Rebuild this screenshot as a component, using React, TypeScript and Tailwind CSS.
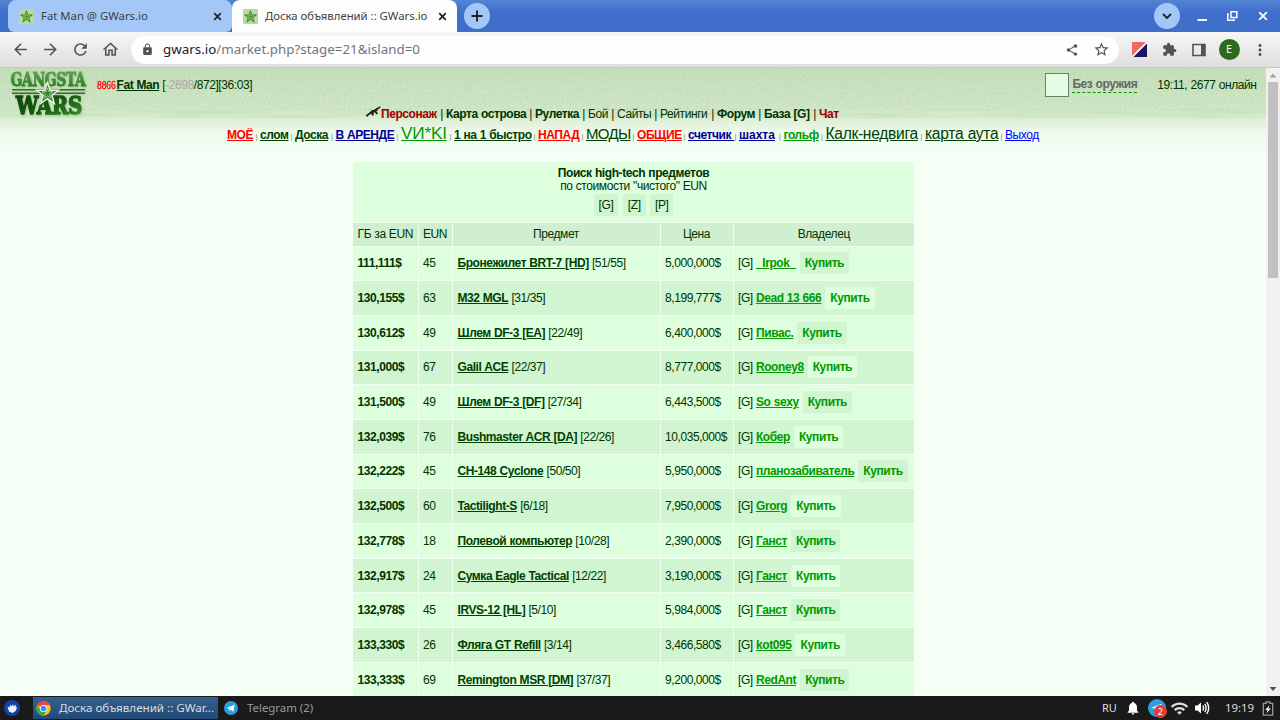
import React from 'react';
import {
  MdArrowBack, MdArrowForward, MdRefresh, MdOutlineHome, MdLock, MdShare, MdStarBorder,
  MdExtension, MdMoreVert, MdNotifications, MdWifi,
} from 'react-icons/md';

function Favicon() {
  return (
    <svg viewBox="0 0 16 16" className="h-[15px] w-[15px] shrink-0">
      <rect width="16" height="16" fill="#b5dc9b" />
      <path d="M8 .8l1.8 5.1h5.3l-4.2 3.3 1.6 5.4L8 11.5l-4.500 3.100 1.600-5.400L.9 5.900h5.300z" fill="#3b7d28" />
      <path d="M8 4.600l.9 2.600h2.600l-2.100 1.600.8 2.600L8 9.900l-2.200 1.500.8-2.600-2.100-1.600h2.600z" fill="#4f9038" stroke="#a5d48a" strokeWidth=".7" />
    </svg>
  );
}

function Logo() {
  return (
    <svg viewBox="0 0 90 50" className="h-[50px] w-[90px] drop-shadow-[1px_1px_1px_#a9c79c]">
      <defs>
        <linearGradient id="top" x1="0" y1="0" x2="0" y2="1">
          <stop offset="0" stopColor="#6aa35c" />
          <stop offset="1" stopColor="#1f7a14" />
        </linearGradient>
        <linearGradient id="bot" x1="0" y1="0" x2="1" y2="1">
          <stop offset="0" stopColor="#0b4208" />
          <stop offset=".5" stopColor="#145a0e" />
          <stop offset="1" stopColor="#3d9431" />
        </linearGradient>
      </defs>
      <g fontFamily="DejaVu Serif, serif" fontWeight="700">
        <text x="6.500" y="18" fontSize="18" textLength="75" lengthAdjust="spacingAndGlyphs" fill="url(#top)" stroke="url(#top)" strokeWidth=".9">GANGSTA</text>
        <text x="12" y="45.500" fontSize="24.500" textLength="66" lengthAdjust="spacingAndGlyphs" fill="url(#bot)" stroke="url(#bot)" strokeWidth="1.500">WARS</text>
      </g>
      <path d="M8 21.700h73M8 25.200h73" stroke="#2b7522" strokeWidth="1.400" />
      <path d="M43.500 14.500l2.700 7.700h8.200l-6.500 5 2.400 8.300-6.800-4.900-6.800 4.900 2.400-8.300-6.500-5h8.200z" fill="#2f7a25" stroke="#eef8e8" strokeWidth="1.400" />
      <path d="M43.500 19.800l1.400 3.900h4.100l-3.300 2.500 1.200 4.100-3.400-2.400-3.400 2.400 1.200-4.100-3.300-2.500h4.100z" fill="#37832b" stroke="#b9dcab" strokeWidth=".8" />
    </svg>
  );
}

function HeaderTexture() {
  return (
    <svg className="pointer-events-none absolute left-0 top-0 h-[50px] w-[1266px]">
      <defs>
        <filter id="grain" x="0" y="0" width="100%" height="100%">
          <feTurbulence type="fractalNoise" baseFrequency="0.45" numOctaves="2" seed="3" />
          <feColorMatrix values="0 0 0 0 .42  0 0 0 0 .62  0 0 0 0 .36  .9 0 0 0 -.36" />
        </filter>
        <filter id="streak" x="0" y="0" width="100%" height="100%">
          <feTurbulence type="fractalNoise" baseFrequency="0.012 0.350" numOctaves="2" seed="8" />
          <feColorMatrix values="0 0 0 0 .5  0 0 0 0 .7  0 0 0 0 .44  1.200 0 0 0 -.45" />
        </filter>
      </defs>
      <rect width="1266" height="42" filter="url(#grain)" />
      <rect y="41" width="1266" height="9" filter="url(#streak)" />
    </svg>
  );
}

function Chrome() {
  return (
    <svg viewBox="0 0 48 48" className="h-[15px] w-[15px] shrink-0">
      <circle cx="24" cy="24" r="23" fill="#fbc116" />
      <path d="M24 24L4.100 12.500A23 23 0 0 1 43.900 12.500L24 13z" fill="#ea4335" />
      <path d="M4.100 12.500A23 23 0 0 0 24 47l10-17L24 24l-10 5z" fill="#34a853" />
      <circle cx="24" cy="24" r="11.500" fill="#fff" />
      <circle cx="24" cy="24" r="8.800" fill="#4285f4" />
    </svg>
  );
}

function Plane({ className }: { className: string }) {
  return (
    <svg viewBox="0 0 24 24" className={className}>
      <circle cx="12" cy="12" r="12" fill="#2a9fda" />
      <path d="M4.500 11.800l13.700-5.500-2.300 12-4.200-3.100-2.200 2-.7-4.100z" fill="#fff" />
      <path d="M8.800 13.100l6.500-4.300-5.200 5.300-.6 3.100z" fill="#b7d9ec" />
    </svg>
  );
}

function Tab({ title, active }: { title: string; active?: boolean }) {
  return (
    <div className={active
      ? 'flex h-8 w-[225px] items-center rounded-t-lg bg-[#fdfdfd] pl-[11px] pr-2'
      : 'flex h-8 w-[224px] items-center rounded-t-lg rounded-b-md bg-[#a3c8f7] pl-[11px] pr-2'}>
      <Favicon />
      <span className="ml-[7.500px] flex-1 whitespace-nowrap font-['Noto_Sans',sans-serif] text-[11.340px] text-[#3c4043]">{title}</span>
      <svg viewBox="0 0 13 13" className="h-[13px] w-[13px]"><path d="M3.200 3.200l6.600 6.600M9.800 3.200L3.200 9.800" stroke="#202124" strokeWidth="1.700" /></svg>
    </div>
  );
}

const links: { t: string; slot: string; cls: string }[] = [
  { t: 'МОЁ', slot: 'w-[33px]', cls: 'font-bold text-[#f00]' },
  { t: 'слом', slot: 'w-[35px]', cls: 'font-bold text-[#004000]' },
  { t: 'Доска', slot: 'w-[40.500px]', cls: 'font-bold text-[#004000]' },
  { t: 'В АРЕНДЕ', slot: 'w-[65.500px]', cls: 'font-bold text-[#000099]' },
  { t: 'VИ*KI', slot: 'w-[53px]', cls: 'text-[17.200px] tracking-[-0.200px] text-[#009900]' },
  { t: '1 на 1 быстро', slot: 'w-[84px]', cls: 'font-bold text-[#004000]' },
  { t: 'НАПАД', slot: 'w-[48px]', cls: 'font-bold text-[#f00]' },
  { t: 'МОДЫ', slot: 'w-[51px]', cls: 'text-[15px] tracking-[-0.700px] text-[#004000]' },
  { t: 'ОБЩИЕ', slot: 'w-[51px]', cls: 'font-bold text-[#f00]' },
  { t: 'счетчик\u00a0', slot: 'w-[51px]', cls: 'font-bold text-[#000099]' },
  { t: 'шахта', slot: 'w-[44.500px]', cls: 'font-bold tracking-[0px] text-[#000099]' },
  { t: 'гольф', slot: 'w-[42px]', cls: 'font-bold text-[#009900]' },
  { t: 'Калк-недвига', slot: 'w-[99.500px]', cls: 'text-[15.600px] tracking-[-0.300px] text-[#004000]' },
  { t: 'карта аута', slot: 'w-[80px]', cls: 'text-[15.600px] tracking-[-0.300px] text-[#004000]' },
  { t: 'Выход', slot: 'w-[34px]', cls: 'text-[#0000ff]' },
];

const menu: { t: string; slot: string; cls: string }[] = [
  { t: 'Персонаж', slot: 'w-[65px]', cls: 'font-bold text-[#990000]' },
  { t: 'Карта острова', slot: 'w-[89px]', cls: 'font-bold' },
  { t: 'Рулетка', slot: 'w-[53px]', cls: 'font-bold' },
  { t: 'Бой', slot: 'w-[29px]', cls: '' },
  { t: 'Сайты', slot: 'w-[43px]', cls: '' },
  { t: 'Рейтинги', slot: 'w-[57px]', cls: '' },
  { t: 'Форум', slot: 'w-[47px]', cls: 'font-bold' },
  { t: 'База [G]', slot: 'w-[55px]', cls: 'font-bold' },
  { t: 'Чат', slot: 'w-[20px]', cls: 'font-bold text-[#990000]' },
];

const rows: [string, string, string, string, string, string][] = [
  ['111,111$', '45', 'Бронежилет BRT-7 [HD]', '[51/55]', '5,000,000$', '_Irpok_'],
  ['130,155$', '63', 'M32 MGL', '[31/35]', '8,199,777$', 'Dead 13 666'],
  ['130,612$', '49', 'Шлем DF-3 [EA]', '[22/49]', '6,400,000$', 'Пивас.'],
  ['131,000$', '67', 'Galil ACE', '[22/37]', '8,777,000$', 'Rooney8'],
  ['131,500$', '49', 'Шлем DF-3 [DF]', '[27/34]', '6,443,500$', 'So sexy'],
  ['132,039$', '76', 'Bushmaster ACR [DA]', '[22/26]', '10,035,000$', 'Кобер'],
  ['132,222$', '45', 'CH-148 Cyclone', '[50/50]', '5,950,000$', 'планозабиватель'],
  ['132,500$', '60', 'Tactilight-S', '[6/18]', '7,950,000$', 'Grorg'],
  ['132,778$', '18', 'Полевой компьютер', '[10/28]', '2,390,000$', 'Ганст'],
  ['132,917$', '24', 'Сумка Eagle Tactical', '[12/22]', '3,190,000$', 'Ганст'],
  ['132,978$', '45', 'IRVS-12 [HL]', '[5/10]', '5,984,000$', 'Ганст'],
  ['133,330$', '26', 'Фляга GT Refill', '[3/14]', '3,466,580$', 'kot095'],
  ['133,333$', '69', 'Remington MSR [DM]', '[37/37]', '9,200,000$', 'RedAnt'],
];

function Browser() {
  return (
    <header className="shrink-0">
      <div className="flex h-8 items-start bg-linear-to-b from-[#5283d5] to-[#3f6fca] to-40% pl-[7.500px]">
        <Tab title="Fat Man @ GWars.io" />
        <Tab title="Доска объявлений :: GWars.io" active />
        <svg viewBox="0 0 26 26" className="ml-[7px] mt-[3px] h-[26px] w-[26px]" fill="none" stroke="#202124" strokeWidth="1.900"><circle cx="13" cy="13" r="13" fill="#a3c8f7" stroke="none" /><path d="M13 7.500v11M7.500 13h11" /></svg>
        <svg viewBox="0 0 26 26" className="ml-auto mt-[3px] h-[26px] w-[26px]" fill="none" stroke="#202124" strokeWidth="1.800"><circle cx="13" cy="13" r="13" fill="#a3c8f7" stroke="none" /><path d="M9 11l4 4 4-4" /></svg>
        <svg viewBox="0 0 100 32" className="h-8 w-[100px]" fill="none" stroke="#f4f7fd">
          <path d="M17.500 20h9.500" strokeWidth="2" />
          <path d="M51 11.800h5.800v5.700H51zM49 14h-1.200v6.300h6.200V19" strokeWidth="1.600" />
          <path d="M79.200 12.200l7.600 7.600M86.800 12.200l-7.600 7.600" strokeWidth="1.900" />
        </svg>
      </div>
      <div className="flex h-9 items-center border-b border-[#c6c6c6] bg-linear-to-b from-[#f7f7f7] to-[#dedede] pl-[11px] text-[#505458]">
        <MdArrowBack className="h-[19px] w-[19px]" />
        <MdArrowForward className="ml-[11px] h-[19px] w-[19px]" />
        <MdRefresh className="ml-[11px] h-[19px] w-[19px]" />
        <MdOutlineHome className="ml-[11px] h-[19px] w-[19px]" />
        <div className="ml-[11px] flex h-7 w-[988px] items-center rounded-full bg-[#fefefe] pl-[10px] pr-[9px]">
          <MdLock className="h-[13px] w-[13px]" />
          <span className="ml-[9px] flex-1 font-['Noto_Sans',sans-serif] text-[13.360px] text-[#72767a]"><span className="text-[#202124]">gwars.io</span>/market.php?stage=21&amp;island=0</span>
          <MdShare className="h-[14px] w-[14px]" />
          <MdStarBorder className="ml-[14px] h-[17px] w-[17px]" />
        </div>
        <svg viewBox="0 0 16 16" className="ml-[12.500px] h-[15px] w-[15px]"><path d="M0 0h15L0 15z" fill="#ee6b60" /><path d="M16 1.500V16H1.500z" fill="#1b1464" /><path d="M16 0L0 16" stroke="#f0f0f0" strokeWidth="1.500" /></svg>
        <MdExtension className="ml-[15px] h-[15px] w-[15px]" />
        <svg viewBox="0 0 14 14" className="ml-[15px] h-[14px] w-[14px]"><path d="M1 1.500h12v11H1z" fill="none" stroke="#505458" strokeWidth="1.600" /><path d="M9 1h4v12H9z" fill="#505458" /></svg>
        <div className="ml-[13px] flex h-[21px] w-[21px] items-center justify-center rounded-full bg-[#2b6b1b] font-['Open_Sans',sans-serif] text-[11px] text-white">E</div>
        <MdMoreVert className="ml-[11px] h-[18px] w-[18px]" />
      </div>
    </header>
  );
}

export default function App() {
  return (
    <div className="flex h-[720px] w-[1280px] flex-col overflow-hidden font-['Liberation_Sans',Arial,sans-serif] text-[#003300]">
      <Browser />
      <main className="flex h-[628px] bg-[#f5fff5] text-[12px] tracking-[-0.420px] [word-spacing:0.300px]">
        <div className="relative flex h-[628px] w-[1266px] flex-col overflow-hidden bg-[linear-gradient(to_bottom,#c6deba_0px,#cde4c3_25px,#d4e9cc_48px,#dcefd5_51px,#eef9ea_64px,#f5fff5_84px)]">
          <HeaderTexture />
          <div className="relative flex h-[38px] shrink-0 items-start">
            <div className="ml-[4px] h-[50px] w-[90px] shrink-0"><Logo /></div>
            <div className="ml-[3px] mt-[9px] flex leading-4">
              <span className="w-[19.500px] whitespace-nowrap"><span className="inline-block origin-left scale-x-[0.78] font-['Liberation_Serif',serif] tracking-[0px] text-[#f00] [-webkit-text-stroke:0.300px_#f00]">8866</span></span>
              <b className="underline">Fat Man</b>
              <span className="ml-[3px]">[<span className="text-[#aaaaaa]">-2698</span>/872][36:03]</span>
            </div>
            <div className="ml-auto mt-[5px] flex items-center pr-[9.500px]">
              <span className="h-[24px] w-[24px] border border-[#6d806d] bg-[#e6fbe4]" />
              <b className="ml-[3px] border-b border-dashed border-[#009900] leading-[15px] text-[#666666]">Без оружия</b>
              <span className="ml-[20px]">19:11, 2677 онлайн</span>
            </div>
          </div>
          <nav className="relative flex h-[16px] shrink-0 items-start pl-[365px] leading-4">
            <svg viewBox="0 0 16 12" className="h-3 w-4"><path d="M.5 9.500L5 6l2-2 1.500 0L13.500 1l1.800-.8v1.600L12.500 3.500l.8.5-2 1.200 1.800 2.400-1.500.8L9.700 6.200l-1 .5 0 2.800H7L6.300 7.800 4 9 2.500 10.800z" fill="#1e241c" /></svg>
            {menu.map((m, i) => (
              <span key={m.t} className={`flex shrink-0 justify-between whitespace-nowrap ${m.slot}`}>
                <span className={m.cls}>{m.t}</span>{i < menu.length - 1 && <span className="pr-[3px]">|</span>}
              </span>
            ))}
          </nav>
          <nav className="relative flex h-[25px] shrink-0 items-baseline pl-[227px] leading-[23px]">
            {links.map((l, i) => (
              <span key={l.t} className={`flex shrink-0 items-baseline justify-between whitespace-nowrap ${l.slot}`}>
                <span className={`underline ${l.cls}`}>{l.t}</span>{i < links.length - 1 && <span className="pr-[3px] text-[7.500px] text-[#669966]">|</span>}
              </span>
            ))}
          </nav>
          <table className="relative ml-[353px] mt-[15px] w-[561px] table-fixed border-collapse">
            <colgroup><col className="w-[65px]" /><col className="w-[34px]" /><col className="w-[208px]" /><col className="w-[73px]" /><col className="w-[181px]" /></colgroup>
            <thead>
              <tr className="h-[60px] bg-[#deffde]">
                <td colSpan={5} className="p-0 pt-[5px] text-center align-top leading-[13px]">
                  <b>Поиск high-tech предметов</b><br />по стоимости "чистого" EUN
                  <div className="mt-[1px] flex justify-center gap-[4.500px]">
                    {['[G]', '[Z]', '[P]'].map((s) => <span key={s} className="bg-[#d0f5d0] px-[5px] leading-[22px]">{s}</span>)}
                  </div>
                </td>
              </tr>
              <tr className="h-[24px] bg-[#d0eed0] text-center">
                {['ГБ за EUN', 'EUN', 'Предмет', 'Цена', 'Владелец'].map((h) => (
                  <td key={h} className="whitespace-nowrap border-y border-l border-[#f0fff0] p-0 first:border-l-0">{h}</td>
                ))}
              </tr>
            </thead>
            <tbody>
              {rows.map((r, i) => (
                <tr key={r[0]} className={i % 2 ? 'h-[34.690px] bg-[#d0f5d0]' : 'h-[34.690px] bg-[#deffde]'}>
                  <td className="border-b border-[#f0fff0] p-0 pl-[4.500px] font-bold">{r[0]}</td>
                  <td className="border-b border-l border-[#f0fff0] p-0 pl-[4.500px]">{r[1]}</td>
                  <td className="whitespace-nowrap border-b border-l border-[#f0fff0] p-0 pl-[5px]"><b className="text-[#004000] underline">{r[2]}</b> {r[3]}</td>
                  <td className="border-b border-l border-[#f0fff0] p-0 pl-[4.500px]">{r[4]}</td>
                  <td className="whitespace-nowrap border-b border-l border-[#f0fff0] p-0 pl-[4.500px]">
                    [G] <b className="text-[#009900] underline">{r[5]}</b>
                    <b className={i % 2 ? 'ml-[4px] inline-block bg-[#deffde] px-[5px] leading-[22px] text-[#009900]' : 'ml-[4px] inline-block bg-[#d0f5d0] px-[5px] leading-[22px] text-[#009900]'}>Купить</b>
                  </td>
                </tr>
              ))}
            </tbody>
          </table>
        </div>
        <div className="flex w-[14px] flex-col items-center bg-[#f1f1f1]">
          <svg viewBox="0 0 14 14" className="h-[14px] w-[14px] shrink-0"><path d="M3.500 9.500L7 5.500l3.500 4z" fill="#a0a0a0" /></svg>
          <div className="h-[196px] w-[10px] bg-[#c1c1c1]" />
          <svg viewBox="0 0 14 14" className="mt-auto h-[14px] w-[14px] shrink-0"><path d="M3.500 5L7 9l3.500-4z" fill="#505050" /></svg>
        </div>
      </main>
      <footer className="flex h-6 shrink-0 items-center bg-[#1a1a1a] font-['Noto_Sans',sans-serif] text-[11.400px] text-[#dddddd]">
        <svg viewBox="0 0 16 16" className="ml-[4px] h-4 w-4"><circle cx="8" cy="8" r="8" fill="#1044a8" /><path d="M3.500 6.500l2 1L6 4.500l1.500 2L9 4l.8 2.500L12 4.500l-.3 2.700 1.500.3-1.700 3.500L8.500 13l-3.500-1.500z" fill="#f2f6ff" /></svg>
        <div className="ml-[13px] flex h-[22px] w-[185px] items-center bg-linear-to-b from-[#33608f] to-[#234a76] pl-[3px]">
          <Chrome /><span className="ml-[8px] whitespace-nowrap text-[11.600px]">Доска объявлений :: GWar...</span>
        </div>
        <Plane className="ml-[6px] h-[14px] w-[14px]" />
        <span className="ml-[9px] text-[#9b9b9b]">Telegram (2)</span>
        <span className="ml-auto text-[11px]">RU</span>
        <MdNotifications className="ml-[8px] h-4 w-4 text-white" />
        <span className="relative ml-[7px] h-[18px] w-[18px]"><Plane className="h-[18px] w-[18px]" /><span className="absolute left-[6px] top-[6px] flex h-[13px] w-[13px] items-center justify-center rounded-full bg-[#e93a3a] text-[9px] text-white">2</span></span>
        <MdWifi className="ml-[4px] h-[19px] w-[19px] text-[#dddddd]" />
        <svg viewBox="0 0 16 16" className="ml-[5px] h-4 w-4" fill="none" stroke="#fff" strokeWidth="1.400"><path d="M1 5.500h2.500L7 2.500v11l-3.500-3H1z" fill="#fff" stroke="none" /><path d="M8.800 5.500q1.500 2.500 0 5M10.800 3.800q2.600 4.200 0 8.400M12.800 2.200q3.800 5.800 0 11.600" /></svg>
        <span className="ml-[15px]">19:19</span>
        <svg viewBox="0 0 12 16" className="ml-[8px] mr-[6px] h-[15px] w-[12px]"><path d="M1 2.500h3V1h4v1.500h3V15H1z" fill="none" stroke="#9a9a9a" strokeWidth="1.400" /><path d="M7.500 4.500L3 9.500h2.500l-1 3.500L9 8H6.500z" fill="#fff" /></svg>
      </footer>
    </div>
  );
}
